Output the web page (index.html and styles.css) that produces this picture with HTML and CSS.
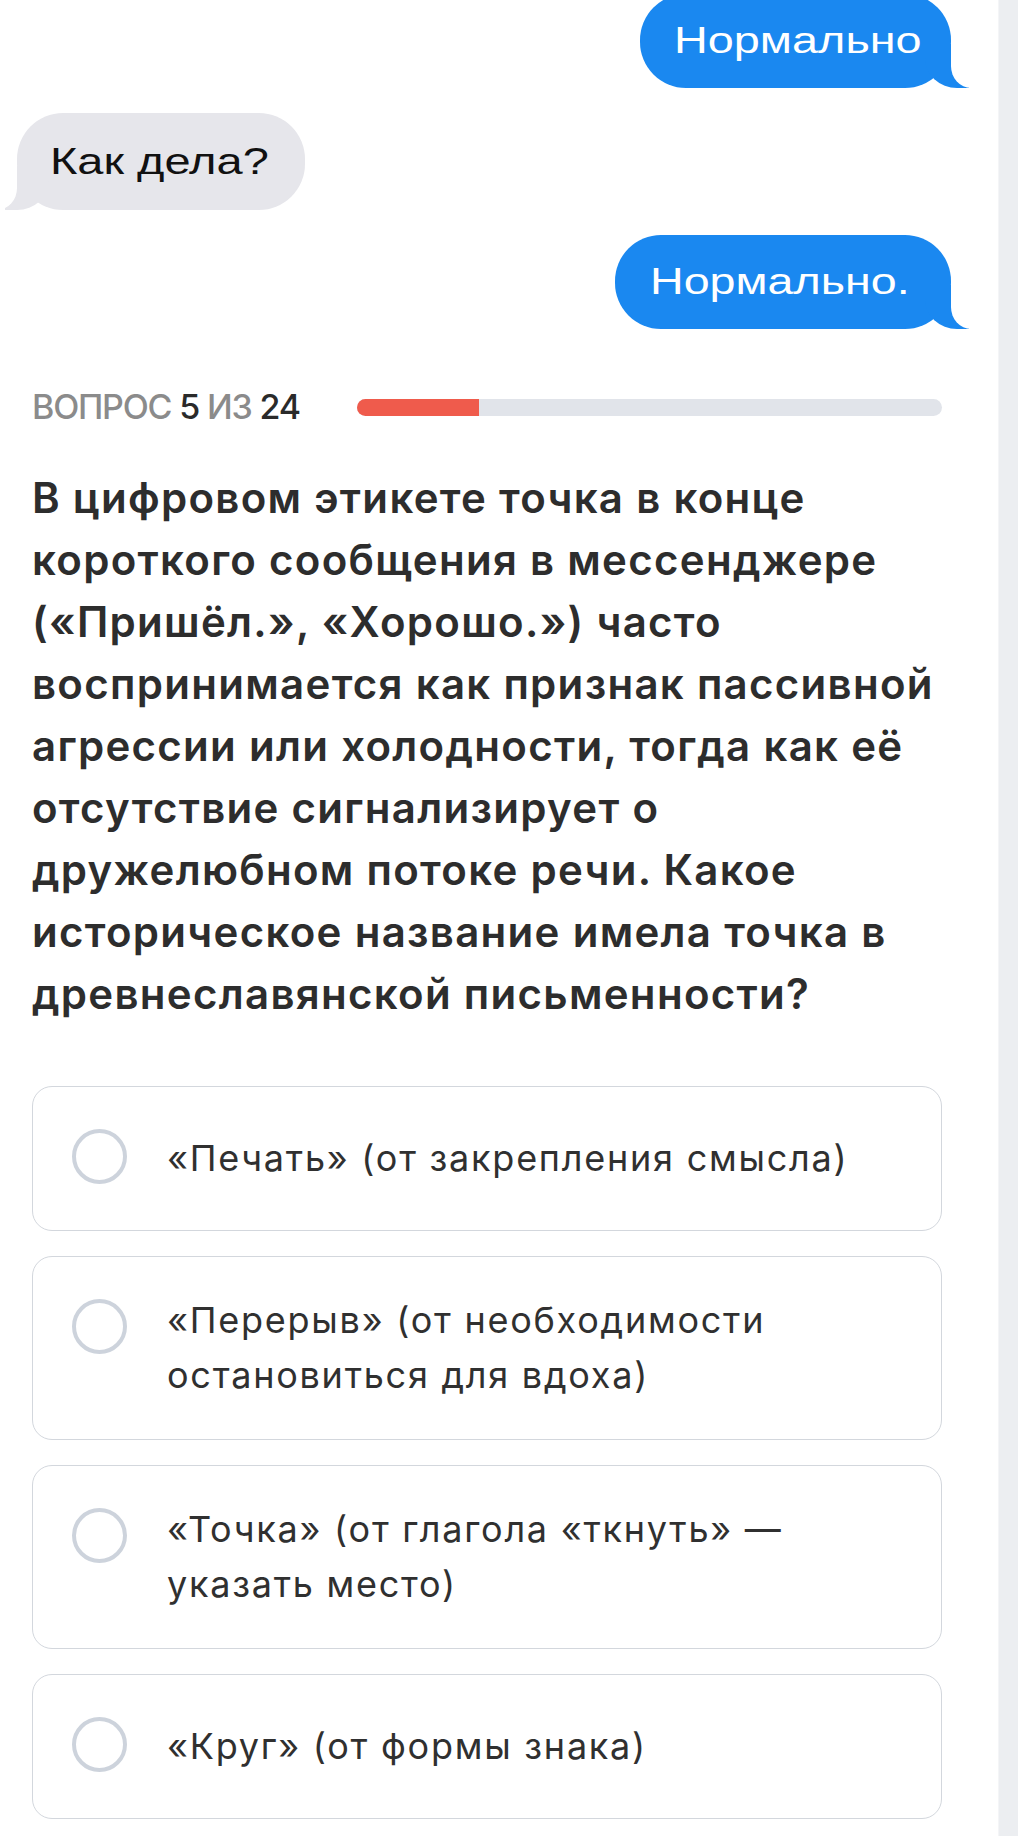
FILE: index.html
```html
<!DOCTYPE html>
<html lang="ru">
<head>
<meta charset="utf-8">
<title>Вопрос 5 из 24</title>
<link rel="stylesheet" href="styles.css">
</head>
<body>
<div class="page">
  <main class="content">
    <section class="chat">
      <div class="chat-row chat-row--out">
        <div class="bubble bubble--sent bubble--first"><span class="bubble-text">Нормально</span></div>
      </div>
      <div class="chat-row chat-row--in">
        <div class="bubble bubble--recv"><span class="bubble-text">Как дела?</span></div>
      </div>
      <div class="chat-row chat-row--out">
        <div class="bubble bubble--sent bubble--third"><span class="bubble-text">Нормально.</span></div>
      </div>
    </section>

    <div class="quiz">
      <div class="progress">
        <div class="progress-label"><span class="muted">ВОПРОС</span> <span class="strong">5</span> <span class="muted">ИЗ</span> <span class="strong">24</span></div>
        <div class="progress-track"><div class="progress-fill" style="width:20.83%"></div></div>
      </div>

      <h1 class="question">В цифровом этикете точка в конце короткого сообщения в мессенджере («Пришёл.», «Хорошо.») часто воспринимается как признак пассивной агрессии или холодности, тогда как её отсутствие сигнализирует о дружелюбном потоке речи. Какое историческое название имела точка в древнеславянской письменности?</h1>

      <ul class="options">
        <li class="option"><span class="radio"></span><span class="option-text">«Печать» (от закрепления смысла)</span></li>
        <li class="option"><span class="radio"></span><span class="option-text">«Перерыв» (от необходимости остановиться для вдоха)</span></li>
        <li class="option"><span class="radio"></span><span class="option-text">«Точка» (от глагола «ткнуть» — указать место)</span></li>
        <li class="option"><span class="radio"></span><span class="option-text">«Круг» (от формы знака)</span></li>
      </ul>
    </div>
  </main>
  <div class="scrollbar"></div>
</div>
</body>
</html>
```

FILE: styles.css
```css
* {
  box-sizing: border-box;
}

html, body {
  margin: 0;
  padding: 0;
  background: #ffffff;
}

body {
  font-family: "Inter", "Noto Sans", sans-serif;
  color: #2d2d2d;
}

.page {
  display: flex;
  min-height: 1836px;
  overflow: hidden;
}

.content {
  flex: 1;
  min-width: 0;
}

.scrollbar {
  width: 20px;
  flex-shrink: 0;
  background: #eceef1;
  border-left: 1px solid #f4f5f7;
}

/* ---------- chat picture ---------- */
.chat {
  display: flex;
  flex-direction: column;
  gap: 25px;
  margin-top: -6px;
  padding: 0 47px 0 17px;
}

.chat-row {
  display: flex;
}

.chat-row--out {
  justify-content: flex-end;
}

.chat-row--in {
  justify-content: flex-start;
}

.bubble {
  position: relative;
  height: 94px;
  border-radius: 46px;
  display: flex;
  align-items: center;
  font-family: "Liberation Sans", Arial, sans-serif;
  font-size: 37px;
  line-height: 44px;
}

.bubble-text {
  display: inline-block;
  position: relative;
  z-index: 2;
  transform-origin: left center;
  transform: scaleX(1.265);
}

.bubble--sent {
  background: #1a88f0;
  color: #ffffff;
}

.bubble--first {
  width: 311px;
  padding-left: 34px;
}

.bubble--third {
  width: 336px;
  padding-left: 35px;
}

.bubble--third .bubble-text {
  transform: scaleX(1.26);
}

.bubble--recv {
  background: #e6e6eb;
  color: #111111;
  width: 288px;
  height: 97px;
  padding-left: 33px;
}

.bubble--recv .bubble-text {
  transform: scaleX(1.27);
}

.bubble--sent::before,
.bubble--recv::before {
  content: "";
  position: absolute;
  bottom: 0;
  width: 44px;
  height: 44px;
  z-index: 0;
}

.bubble--sent::after,
.bubble--recv::after {
  content: "";
  position: absolute;
  bottom: 0;
  width: 22px;
  height: 46px;
  background: #ffffff;
  z-index: 1;
}

.bubble--sent::before {
  right: -18px;
  background: #1a88f0;
  border-bottom-left-radius: 32px 30px;
}

.bubble--sent::after {
  right: -22px;
  border-bottom-left-radius: 20px 22px;
}

.bubble--recv::before {
  left: -12px;
  background: #e6e6eb;
  border-bottom-right-radius: 32px 30px;
}

.bubble--recv::after {
  left: -22px;
  width: 22px;
  border-bottom-right-radius: 20px 22px;
}

/* ---------- quiz ---------- */
.quiz {
  padding: 0 56px 0 32px;
}

.progress {
  display: flex;
  align-items: center;
  gap: 57px;
  height: 40px;
  margin-top: 58px;
}

.progress-label {
  font-size: 34px;
  line-height: 40px;
  font-weight: 500;
  letter-spacing: -1.2px;
  white-space: nowrap;
}

.muted {
  color: #8b8b8b;
}

.strong {
  color: #2a2a2a;
}

.progress-track {
  flex: 1;
  height: 17px;
  border-radius: 9px;
  background: #e1e4ea;
  overflow: hidden;
}

.progress-fill {
  height: 100%;
  background: #ef5b4c;
}

.question {
  margin: 40px 0 0;
  font-size: 42px;
  line-height: 62px;
  font-weight: 600;
  letter-spacing: 1.3px;
  color: #2d2d2d;
}

.options {
  list-style: none;
  margin: 61px 0 0;
  padding: 0;
  display: flex;
  flex-direction: column;
  gap: 25px;
}

.option {
  display: flex;
  align-items: center;
  gap: 40px;
  min-height: 145px;
  padding: 36px 40px 36px 39px;
  border: 1.5px solid #d3d7dd;
  border-radius: 20px;
  background: #ffffff;
}

.radio {
  align-self: flex-start;
  flex-shrink: 0;
  width: 55px;
  height: 55px;
  margin-top: 6px;
  border: 4.5px solid #cdd3dc;
  border-radius: 50%;
}

.option-text {
  font-size: 36px;
  line-height: 55px;
  font-weight: 400;
  letter-spacing: 1.75px;
  color: #303030;
}
```
